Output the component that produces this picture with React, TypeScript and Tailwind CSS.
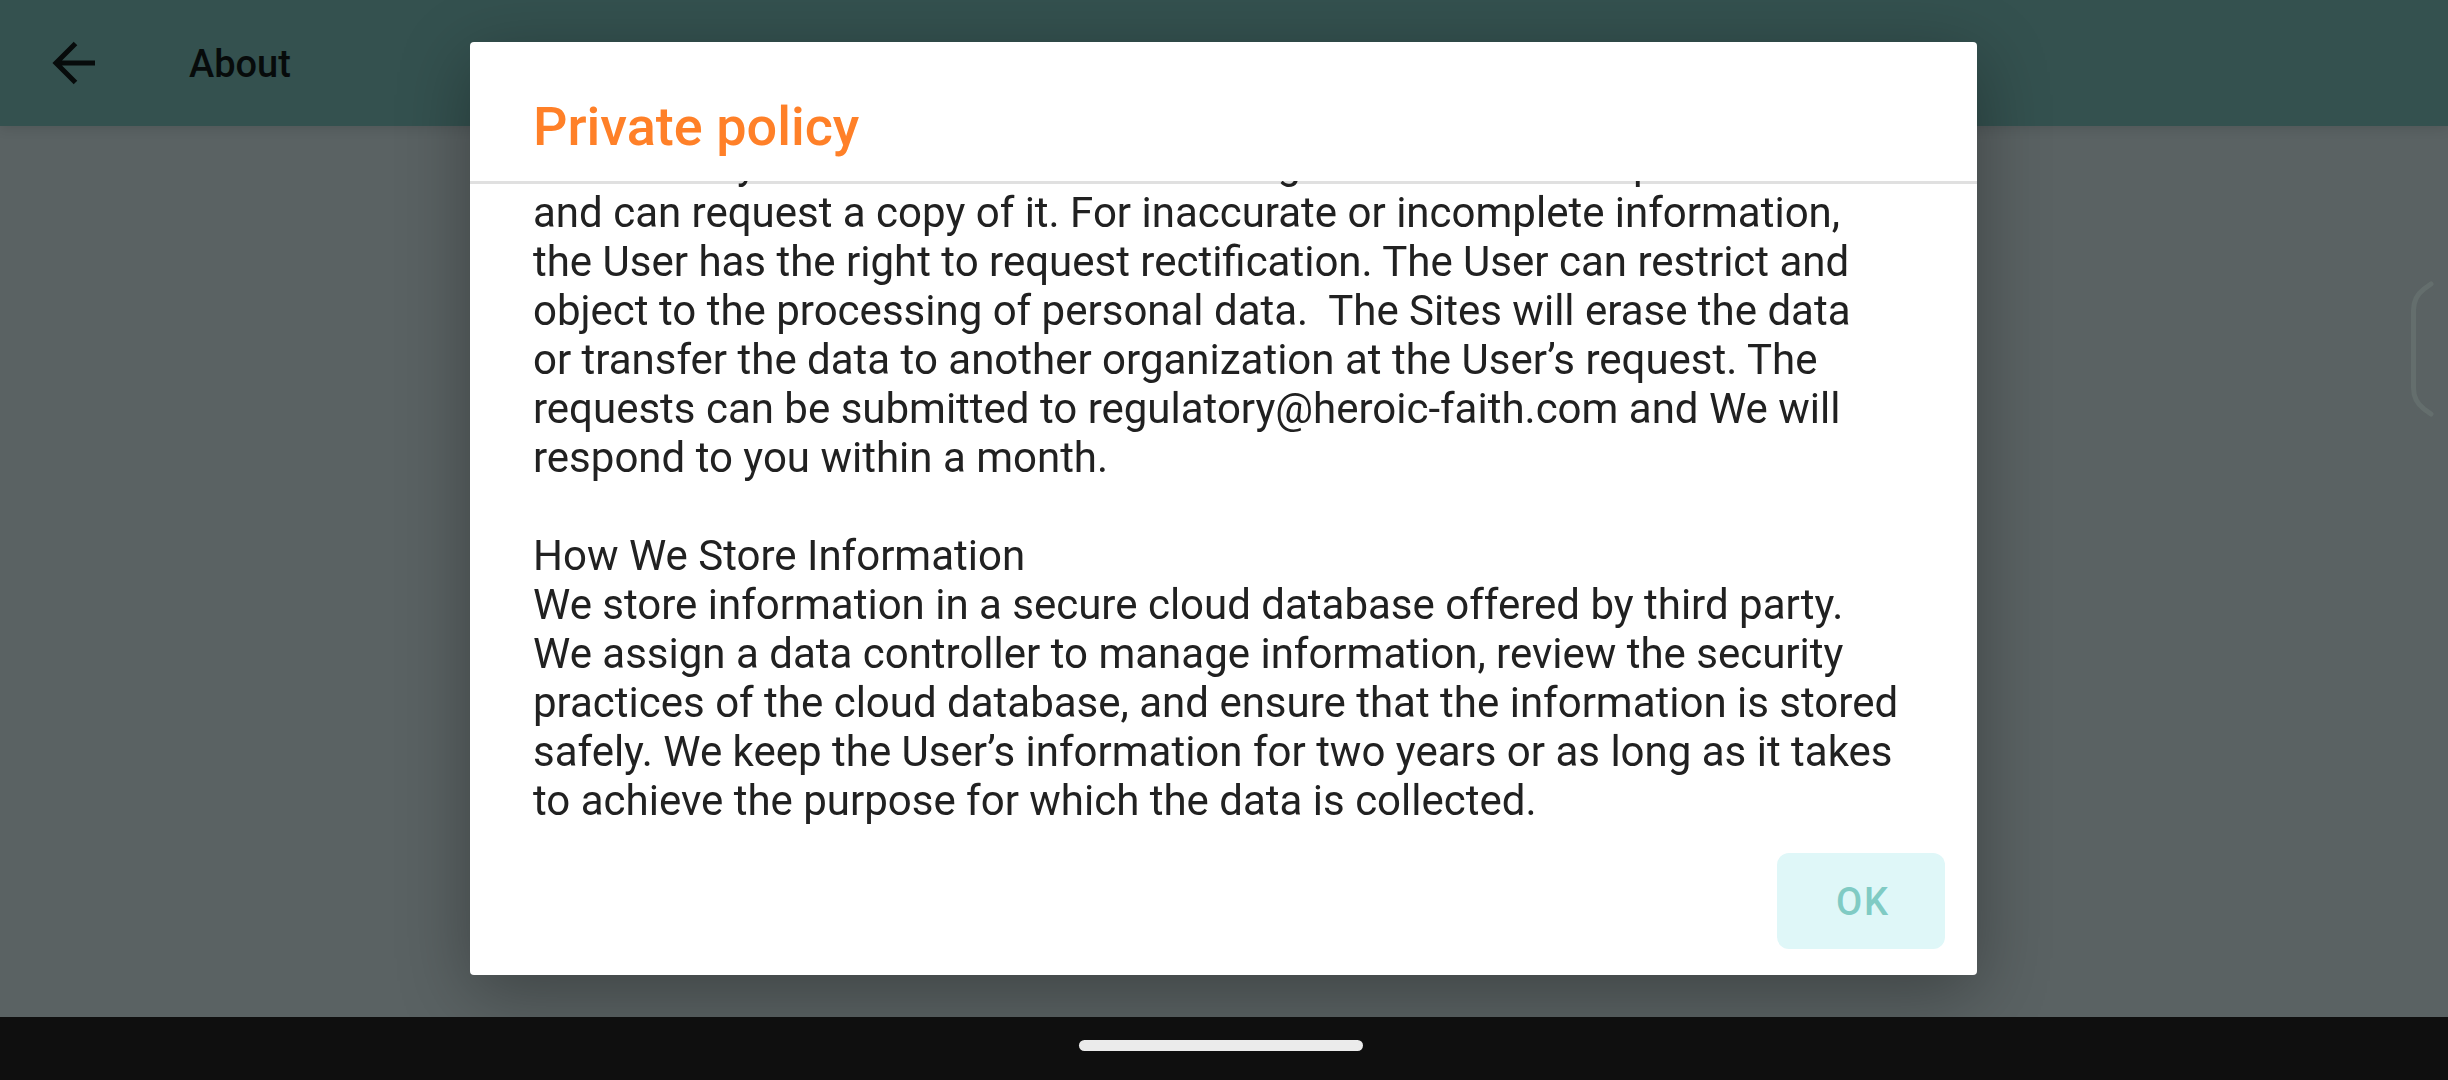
const rights = [
  'collected by the Site. The User has the right to access their personal data and can request a copy of it. For inaccurate or incomplete information, the User has the right to request rectification. The User can restrict and object to the processing of personal data.\u00a0 The Sites will erase the data',
  'or transfer the data to another organization at the User’s request. The requests can be submitted to regulatory@heroic-faith.com and We will respond to you within a month.',
];

const storage =
  'We store information in a secure cloud database offered by third party. We assign a data controller to manage information, review the security practices of the cloud database, and ensure that the information is stored safely. We keep the User’s information for two years or as long as it takes to achieve the purpose for which the data is collected.';

function AppBar() {
  return (
    <header className="flex h-[126px] items-center bg-[#34514f] pl-12 text-[#070b0b] shadow-[0_2px_12px_rgba(0,0,0,0.12)]">
      <button type="button" aria-label="Back" className="size-14">
        <svg viewBox="0 0 56 56" className="size-14" fill="none" stroke="currentColor" strokeWidth="5">
          <path d="M47 28H9M27.500 8.500 8 28l19.500 19.500" />
        </svg>
      </button>
      <h1 className="ml-[85px] pt-0.5 text-[38px] leading-none font-medium">About</h1>
    </header>
  );
}

function EdgeHandle() {
  return (
    <svg viewBox="0 0 24 138" className="mt-[154px] mr-[13px] h-[138px] w-6" fill="none" stroke="#646e6d" strokeWidth="5" strokeLinecap="round">
      <path d="M20 4 13 9Q2.500 17 2.500 30V108Q2.500 121 13 129L20 134" />
    </svg>
  );
}

function PolicyDialog() {
  return (
    <section
      role="dialog"
      aria-modal="true"
      aria-labelledby="policy-title"
      className="flex max-h-full w-full max-w-[1507px] flex-col rounded bg-white shadow-[0_18px_72px_rgba(0,0,0,0.32)]"
    >
      <h2 id="policy-title" className="px-[63px] pt-[53px] pb-[22px] text-[54px] leading-[64px] font-medium text-[#ff8028]">
        Private policy
      </h2>
      <div className="isolate flex min-h-0 flex-1 flex-col-reverse overflow-y-auto text-[42px] leading-[49px] text-[#212121] [scrollbar-width:none]">
        <div className="pr-[72px] pb-0.5 pl-[63px]">
          {rights.map((text) => (
            <p key={text}>{text}</p>
          ))}
          <h3 className="mt-[49px]">How We Store Information</h3>
          <p>{storage}</p>
        </div>
        <div className="sticky top-0 -z-10 -mb-[3px] h-[3px] shrink-0 bg-[#e0e0e0]" />
      </div>
      <footer className="flex justify-end pt-[26px] pr-8 pb-[26px]">
        <button type="button" className="h-24 w-[168px] rounded-xl bg-[#dff7f8] pt-0.5 pl-1 text-[38px] font-medium tracking-wider text-[#80cbc4]">
          OK
        </button>
      </footer>
    </section>
  );
}

export default function App() {
  return (
    <div className="grid h-screen grid-rows-[minmax(0,1fr)_63px] bg-[#5a6263] font-['Roboto',sans-serif]">
      <div className="relative min-h-0 overflow-hidden">
        <AppBar />
        <main className="flex justify-end">
          <EdgeHandle />
        </main>
        <div className="absolute inset-0 flex items-center justify-center py-[42px] pr-[49px] pl-12">
          <PolicyDialog />
        </div>
      </div>
      <nav className="flex justify-center bg-[#0f0f0f] pt-[23px] pr-1.5">
        <button type="button" aria-label="Home" className="h-[11px] w-[284px] rounded-full bg-[#ebebeb]" />
      </nav>
    </div>
  );
}
